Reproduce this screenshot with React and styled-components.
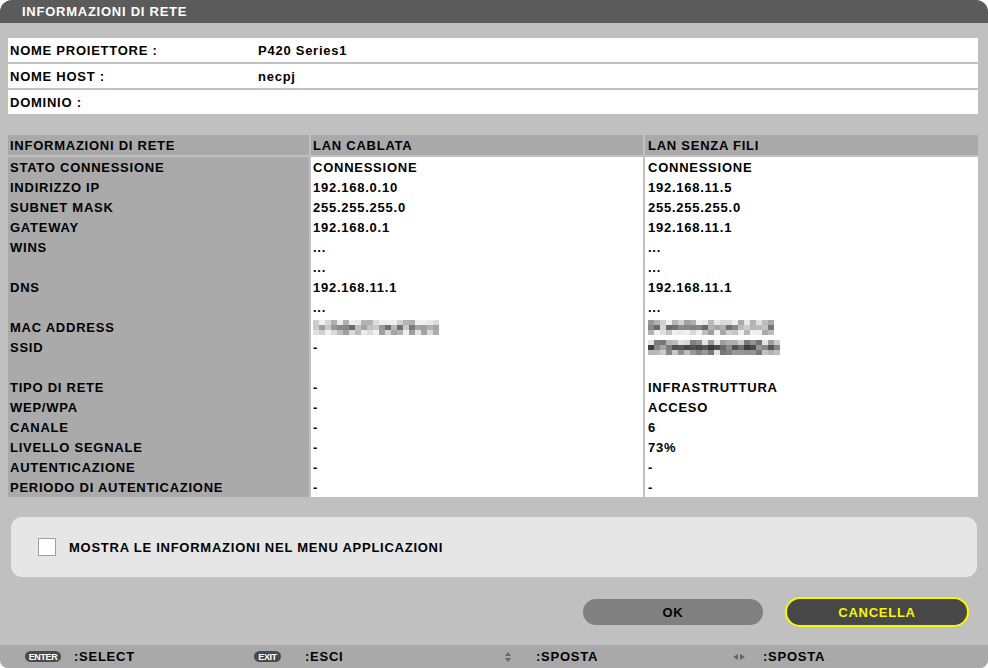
import React from 'react';
import styled, { createGlobalStyle } from 'styled-components';

const GlobalStyle = createGlobalStyle`
  html, body {
    margin: 0;
    padding: 0;
    background: #ffffff;
  }
  body {
    font-family: "Liberation Sans", Arial, sans-serif;
  }
`;

const Window = styled.div`
  width: 988px;
  height: 668px;
  background: #c0c0c0;
  border-radius: 12px 12px 8px 8px;
  overflow: hidden;
  display: flex;
  flex-direction: column;
  font-family: "Liberation Sans", Arial, sans-serif;
  font-weight: bold;
  font-size: 13px;
  letter-spacing: 0.75px;
  color: #000;
`;

const TitleBar = styled.div`
  height: 23px;
  background: #5b5b5b;
  color: #ffffff;
  display: flex;
  align-items: center;
  padding-left: 22px;
  letter-spacing: 0.75px;
`;

const Content = styled.div`
  flex: 1;
  display: flex;
  flex-direction: column;
  padding: 15px 10px 0 8px;
`;

const InfoList = styled.div`
  display: flex;
  flex-direction: column;
  gap: 2px;
`;

const InfoRow = styled.div`
  height: 24px;
  background: #ffffff;
  display: grid;
  grid-template-columns: 248px 1fr;
  align-items: center;
  padding-left: 2px;
`;

const Table = styled.div`
  margin-top: 21px;
  display: grid;
  grid-template-columns: 301px 332px 333px;
  column-gap: 2px;
`;

const HeadCell = styled.div`
  height: 20px;
  background: #a9a9a9;
  display: flex;
  align-items: center;
  padding-left: ${(p) => p.$pad || 2}px;
  margin-bottom: 2px;
`;

const Cell = styled.div`
  height: 20px;
  background: ${(p) => (p.$label ? '#aaaaaa' : '#ffffff')};
  display: flex;
  align-items: center;
  padding-left: ${(p) => p.$pad || 2}px;
  white-space: nowrap;
`;

const Panel = styled.div`
  margin: 20px 1px 0 3px;
  height: 60px;
  background: #e6e6e6;
  border-radius: 11px;
  display: flex;
  align-items: center;
  padding-left: 27px;
  gap: 13px;
`;

const CheckBox = styled.div`
  width: 16px;
  height: 16px;
  background: #ffffff;
  border: 1px solid #a0a0a0;
`;

const ButtonRow = styled.div`
  margin-top: 20px;
  height: 30px;
  display: flex;
  justify-content: flex-end;
  align-items: center;
  gap: 22px;
  padding-right: 9px;
`;

const Button = styled.div`
  box-sizing: border-box;
  width: ${(p) => (p.$active ? 184 : 180)}px;
  height: ${(p) => (p.$active ? 30 : 26)}px;
  border-radius: 15px;
  display: flex;
  align-items: center;
  justify-content: center;
  background: ${(p) => (p.$active ? '#474747' : '#808080')};
  color: ${(p) => (p.$active ? '#f7f700' : '#000000')};
  border: ${(p) => (p.$active ? '2px solid #f7f700' : 'none')};
`;

const Footer = styled.div`
  height: 23px;
  margin-top: 18px;
  background: #a9a9a9;
  display: flex;
  align-items: center;
`;

const FooterItem = styled.div`
  width: ${(p) => p.$w}px;
  display: flex;
  align-items: center;
  padding-left: ${(p) => p.$pad}px;
  box-sizing: border-box;
`;

const KeyPill = styled.span`
  display: inline-flex;
  align-items: center;
  justify-content: center;
  width: ${(p) => p.$w}px;
  height: 11px;
  border-radius: 6px;
  background: #4a4a4a;
  color: #ffffff;
  font-size: 9px;
  letter-spacing: -0.4px;
  margin-right: ${(p) => p.$gap}px;
`;

const KeyIcon = styled.svg`
  margin-right: ${(p) => p.$gap}px;
  flex-shrink: 0;
`;

const shades = (seed, n) => {
  let x = 0;
  for (let i = 0; i < seed.length; i++) x = (x * 31 + seed.charCodeAt(i)) % 9973;
  const out = [];
  for (let i = 0; i < n; i++) {
    x = (x * 1103 + 12345) % 9973;
    out.push(x % 100);
  }
  return out;
};

const Pixelated = ({ seed, cols, dark }) => {
  const vals = shades(seed, cols * 3);
  const bw = 6;
  const bh = 5;
  return (
    <svg width={cols * bw} height={bh * 3} style={{ display: 'block' }}>
      {vals.map((v, i) => {
        const c = i % cols;
        const r = Math.floor(i / cols);
        const base = r === 1 ? (dark ? 110 : 160) : (dark ? 175 : 210);
        const g = Math.max(60, Math.min(240, base + Math.round((v - 50) * 1.2)));
        return (
          <rect
            key={i}
            x={c * bw}
            y={r * bh}
            width={bw}
            height={bh}
            fill={`rgb(${g},${g},${g})`}
          />
        );
      })}
    </svg>
  );
};

const rows = [
  ['STATO CONNESSIONE', 'CONNESSIONE', 'CONNESSIONE'],
  ['INDIRIZZO IP', '192.168.0.10', '192.168.11.5'],
  ['SUBNET MASK', '255.255.255.0', '255.255.255.0'],
  ['GATEWAY', '192.168.0.1', '192.168.11.1'],
  ['WINS', '...', '...'],
  ['', '...', '...'],
  ['DNS', '192.168.11.1', '192.168.11.1'],
  ['', '...', '...'],
  ['MAC ADDRESS', { seed: 'mac-wired', cols: 21 }, { seed: 'mac-wifi', cols: 21 }],
  ['SSID', '-', { seed: 'ssid-wifi', cols: 22, dark: true }],
  ['', '', ''],
  ['TIPO DI RETE', '-', 'INFRASTRUTTURA'],
  ['WEP/WPA', '-', 'ACCESO'],
  ['CANALE', '-', '6'],
  ['LIVELLO SEGNALE', '-', '73%'],
  ['AUTENTICAZIONE', '-', '-'],
  ['PERIODO DI AUTENTICAZIONE', '-', '-'],
];

const renderValue = (v) =>
  typeof v === 'object' ? <Pixelated seed={v.seed} cols={v.cols} dark={v.dark} /> : v;

const App = () => (
  <>
    <GlobalStyle />
    <Window>
      <TitleBar>INFORMAZIONI DI RETE</TitleBar>
      <Content>
        <InfoList>
          <InfoRow>
            <span>NOME PROIETTORE :</span>
            <span>P420 Series1</span>
          </InfoRow>
          <InfoRow>
            <span>NOME HOST :</span>
            <span>necpj</span>
          </InfoRow>
          <InfoRow>
            <span>DOMINIO :</span>
            <span />
          </InfoRow>
        </InfoList>

        <Table>
          <HeadCell>INFORMAZIONI DI RETE</HeadCell>
          <HeadCell>LAN CABLATA</HeadCell>
          <HeadCell $pad={3}>LAN SENZA FILI</HeadCell>
          {rows.map((r, i) => (
            <React.Fragment key={i}>
              <Cell $label>{r[0]}</Cell>
              <Cell>{renderValue(r[1])}</Cell>
              <Cell $pad={3}>{renderValue(r[2])}</Cell>
            </React.Fragment>
          ))}
        </Table>

        <Panel>
          <CheckBox />
          <span>MOSTRA LE INFORMAZIONI NEL MENU APPLICAZIONI</span>
        </Panel>

        <ButtonRow>
          <Button>OK</Button>
          <Button $active>CANCELLA</Button>
        </ButtonRow>
      </Content>

      <Footer>
        <FooterItem $w={229} $pad={25}>
          <KeyPill $w={36} $gap={13}>ENTER</KeyPill>
          :SELECT
        </FooterItem>
        <FooterItem $w={229} $pad={25}>
          <KeyPill $w={27} $gap={24}>EXIT</KeyPill>
          :ESCI
        </FooterItem>
        <FooterItem $w={229} $pad={46}>
          <KeyIcon width="8" height="12" viewBox="0 0 8 12" $gap={24}>
            <polygon points="4,1 7,5 1,5" fill="#666" />
            <polygon points="1,7 7,7 4,11" fill="#666" />
          </KeyIcon>
          :SPOSTA
        </FooterItem>
        <FooterItem $w={229} $pad={45}>
          <KeyIcon width="14" height="8" viewBox="0 0 14 8" $gap={17}>
            <polygon points="1,4 6,1 6,7" fill="#666" />
            <polygon points="8,1 13,4 8,7" fill="#666" />
          </KeyIcon>
          :SPOSTA
        </FooterItem>
      </Footer>
    </Window>
  </>
);

export default App;
